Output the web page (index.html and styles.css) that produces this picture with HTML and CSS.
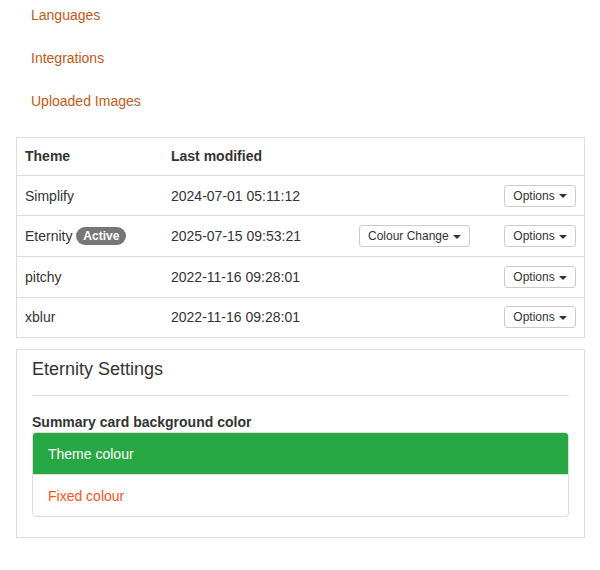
FILE: index.html
```html
<!DOCTYPE html>
<html>
<head>
<meta charset="utf-8">
<link rel="stylesheet" href="styles.css">
</head>
<body>
<div class="page">
  <ul class="nav">
    <li><a href="#">Languages</a></li>
    <li><a href="#">Integrations</a></li>
    <li><a href="#">Uploaded Images</a></li>
  </ul>

  <div class="table-panel">
    <table class="themes">
      <colgroup>
        <col class="c1"><col class="c2"><col class="c3"><col class="c4">
      </colgroup>
      <thead>
        <tr><th>Theme</th><th>Last modified</th><th></th><th></th></tr>
      </thead>
      <tbody>
        <tr class="r40">
          <td>Simplify</td>
          <td>2024-07-01 05:11:12</td>
          <td></td>
          <td class="right"><button class="btn">Options <span class="caret"></span></button></td>
        </tr>
        <tr class="r41">
          <td>Eternity <span class="badge">Active</span></td>
          <td>2025-07-15 09:53:21</td>
          <td><button class="btn">Colour Change <span class="caret"></span></button></td>
          <td class="right"><button class="btn">Options <span class="caret"></span></button></td>
        </tr>
        <tr class="r41">
          <td>pitchy</td>
          <td>2022-11-16 09:28:01</td>
          <td></td>
          <td class="right"><button class="btn">Options <span class="caret"></span></button></td>
        </tr>
        <tr class="r39">
          <td>xblur</td>
          <td>2022-11-16 09:28:01</td>
          <td></td>
          <td class="right"><button class="btn">Options <span class="caret"></span></button></td>
        </tr>
      </tbody>
    </table>
  </div>

  <div class="settings">
    <h3 class="settings-title">Eternity Settings</h3>
    <hr class="divider">
    <div class="field-label">Summary card background color</div>
    <div class="list-group">
      <div class="list-item active">Theme colour</div>
      <div class="list-item fixed">Fixed colour</div>
    </div>
  </div>
</div>
</body>
</html>
```

FILE: styles.css
```css
* { box-sizing: border-box; }

html, body {
  margin: 0;
  padding: 0;
  background: #fff;
}

body {
  font-family: "Liberation Sans", Arial, Helvetica, sans-serif;
  font-size: 14px;
  line-height: 20px;
  color: #333;
}

.page {
  padding: 0 15px 0 16px;
}

.nav {
  list-style: none;
  margin: -6px 0 0 0;
  padding: 0;
}

.nav li a {
  display: block;
  padding: 11px 15px 12px;
  color: #c05a16;
  text-decoration: none;
}

.table-panel {
  margin-top: 14px;
  border: 1px solid #ddd;
}

.themes {
  width: 100%;
  border-collapse: collapse;
  table-layout: fixed;
}

.c1 { width: 146px; }
.c2 { width: 188px; }
.c3 { width: 145px; }
.c4 { width: 88px; }

.themes th {
  text-align: left;
  font-weight: bold;
  padding: 8px 8px 9px;
  line-height: 20px;
  vertical-align: bottom;
}

.themes td {
  padding: 0 8px;
  border-top: 1px solid #ddd;
  line-height: 20px;
  vertical-align: middle;
}

.themes tr.r39 td { height: 39px; }
.themes tr.r40 td { height: 40px; }
.themes tr.r41 td { height: 41px; }

.themes td.right { text-align: right; }

.btn {
  display: inline-block;
  font-family: "Liberation Sans", Arial, Helvetica, sans-serif;
  font-size: 12px;
  line-height: 18px;
  padding: 1px 8px;
  color: #333;
  background: #fff;
  border: 1px solid #ccc;
  border-radius: 3px;
  vertical-align: middle;
  cursor: pointer;
}

.caret {
  display: inline-block;
  width: 0;
  height: 0;
  margin-left: 1px;
  vertical-align: middle;
  border-top: 4px solid #333;
  border-left: 4px solid transparent;
  border-right: 4px solid transparent;
}

.badge {
  display: inline-block;
  padding: 3px 7px;
  font-size: 12px;
  font-weight: bold;
  line-height: 12px;
  color: #fff;
  background: #777;
  border-radius: 10px;
  vertical-align: 1px;
}

.settings {
  margin-top: 11px;
  border: 1px solid #ddd;
  padding: 9px 15px 20px;
}

.settings-title {
  margin: 0;
  font-size: 18px;
  font-weight: normal;
  line-height: 20px;
  color: #333;
}

.divider {
  margin: 16px 0 16px;
  border: 0;
  border-top: 1px solid #ddd;
  height: 0;
}

.field-label {
  font-weight: bold;
  line-height: 20px;
}

.list-group {
  border: 1px solid #ddd;
  border-radius: 4px;
  overflow: hidden;
}

.list-item {
  padding: 11px 15px 10px;
  line-height: 20px;
}

.list-item + .list-item {
  border-top: 1px solid #ddd;
}

.list-item.active {
  background: #28a745;
  color: #fff;
  margin: -1px -1px 0;
  padding: 12px 16px 10px;
}

.list-item.fixed {
  color: #ff5319;
}
```
